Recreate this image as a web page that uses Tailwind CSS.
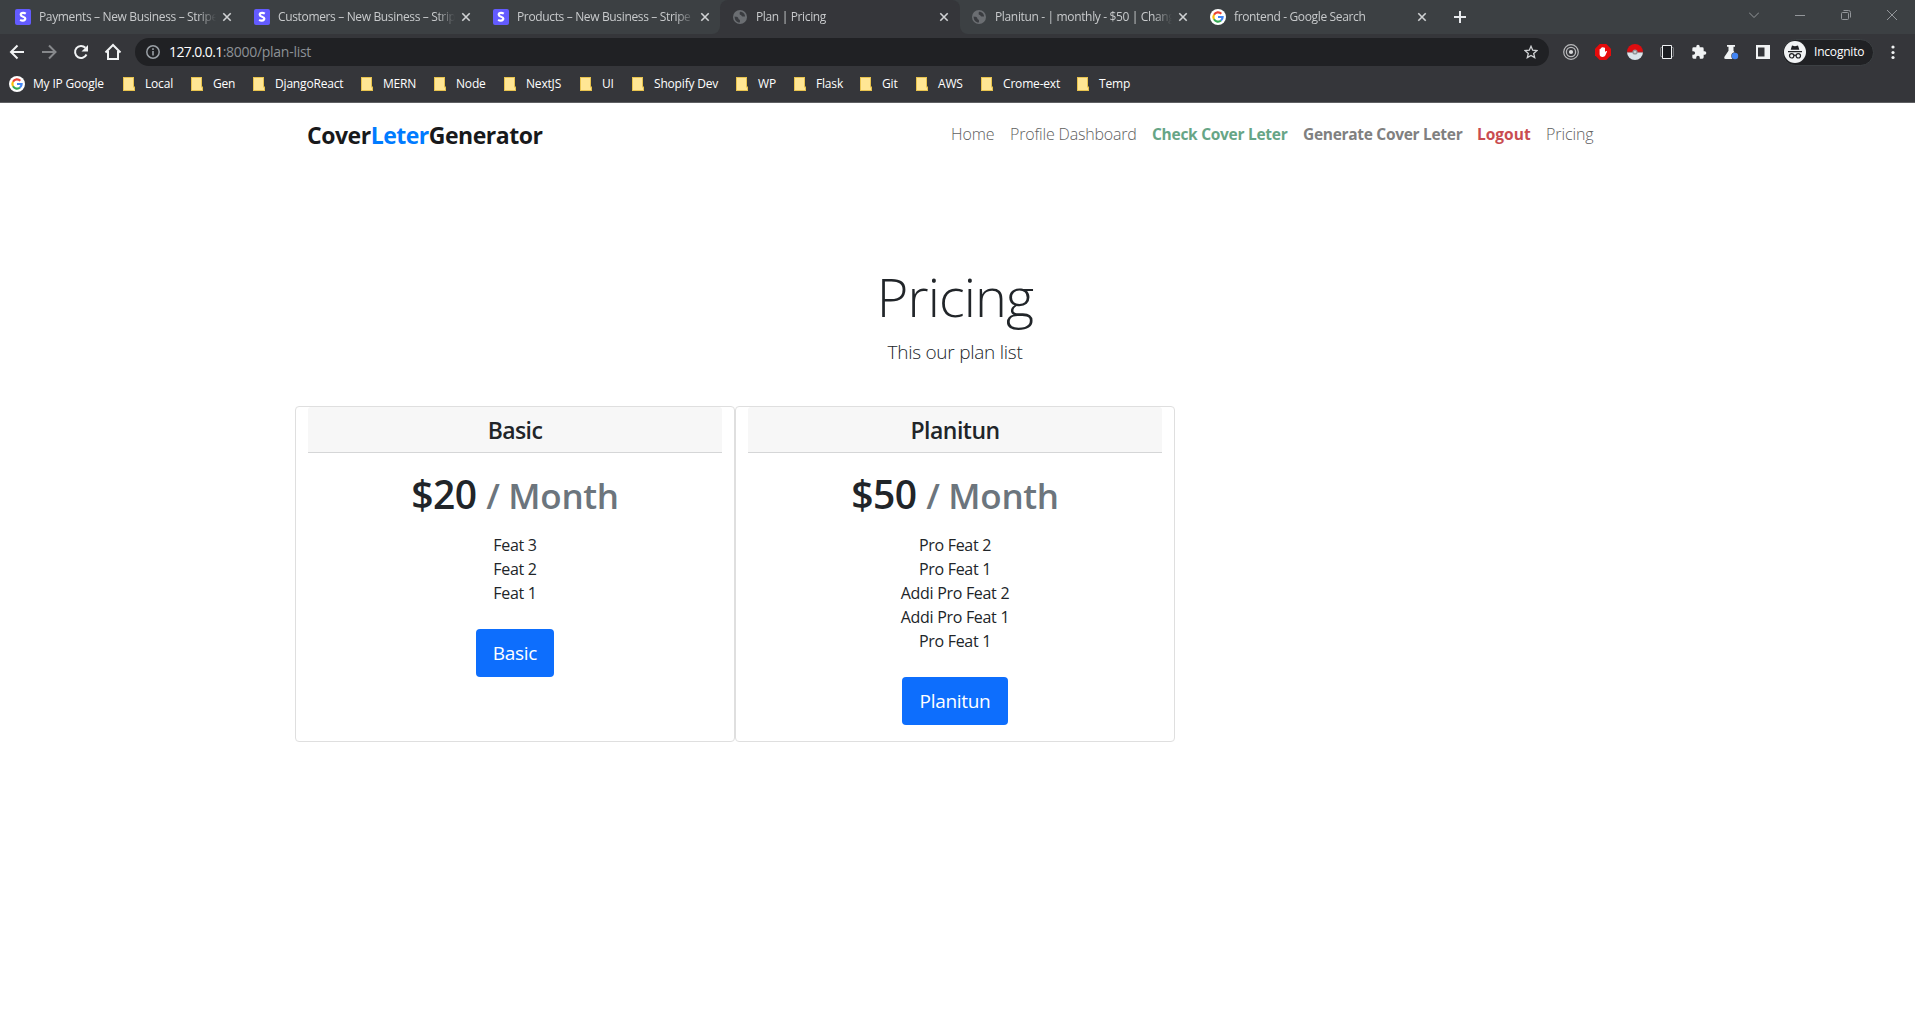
<!DOCTYPE html>
<html lang="en">
<head>
<meta charset="utf-8">
<title>Plan | Pricing</title>
<script src="https://cdn.jsdelivr.net/npm/@tailwindcss/browser@4"></script>
</head>
<body class="h-screen overflow-hidden bg-white font-['Open_Sans','Noto_Sans',sans-serif] text-[#212529]">

<svg class="hidden">
  <symbol id="stripe" viewBox="0 0 16 16"><rect width="16" height="16" rx="2" fill="#635bff"/><path d="M10.8 4.6C10 4.1 9 3.9 8.1 3.9c-1.500 0-2.400.700-2.400 1.800 0 2.500 4.600 1.700 4.600 3.900 0 1.300-1 2-2.500 2-1 0-2-.300-2.700-.700" fill="none" stroke="#fff" stroke-width="2.200"/></symbol>
  <symbol id="google" viewBox="0 0 16 16"><circle cx="8" cy="8" r="8" fill="#fff"/><g fill="none" stroke-width="2.200"><path d="M4 5.700A4.600 4.600 0 0 1 11.300 4.800" stroke="#ea4335"/><path d="M4 5.700A4.600 4.600 0 0 0 4 10.300" stroke="#fbbc05"/><path d="M4 10.300A4.600 4.600 0 0 0 11 11.500" stroke="#34a853"/><path d="M8 8h4.600A4.600 4.600 0 0 1 11 11.500" stroke="#4285f4"/></g></symbol>
  <symbol id="globe" viewBox="0 0 16 16"><circle cx="8" cy="8" r="7" fill="#6b6e72"/><path d="M2.600 7.500c1.400.300 2.600 0 3.400.900.700.800.200 1.800 1.300 2.200.900.400.800 1.700.500 3C4.600 13.500 2.500 10.900 2.600 7.500zM8 2.700c-.500 1-.300 2-.200 2.800.800.700 1.500.500 2 1.400.500.800 1.600.800 3.300.500C13 4.800 11 2.600 8 2.700z" fill="#3a3c40"/></symbol>
  <symbol id="close" viewBox="0 0 10 10"><path d="M1.300 1.300l7.400 7.400M8.700 1.300L1.300 8.700" stroke="#d0d2d4" stroke-width="1.600"/></symbol>
  <symbol id="folder" viewBox="0 0 12 14"><path d="M0 0h11v9.500h1V14H0z" fill="#e8c34e"/><path d="M1 1h9v12H1z" fill="#ffe694"/><path d="M10 10.500h1V13h-1z" fill="#ffe694"/></symbol>
</svg>

<header class="flex h-[103px] flex-col border-b border-[#5f6063] bg-[#35363a]">
  <!-- Tab strip -->
  <div class="flex h-[34px] shrink-0 bg-[#35363a]">
    <div id="tabs-left" class="flex w-[720px] rounded-br-lg bg-[#3c4043]"></div>
    <div class="w-[240px] bg-[#3c4043]"><div id="tab-active" class="flex h-full w-full rounded-t-lg bg-[#35363a]"></div></div>
    <div id="tabs-right" class="flex flex-1 rounded-bl-lg bg-[#3c4043]"></div>
  </div>

  <!-- Toolbar -->
  <div class="flex h-9 shrink-0 items-center">
    <div class="flex w-[135px] items-center gap-4 pl-2">
      <svg class="ml-px size-4" viewBox="0 0 16 16" fill="none" stroke="#f1f3f4" stroke-width="2"><path d="M15 8H2.500M8.500 1.500L2 8l6.500 6.500"/></svg>
      <svg class="size-4" viewBox="0 0 16 16" fill="none" stroke="#86888b" stroke-width="2"><path d="M1 8h13M8 1.500L14.500 8 8 14.500"/></svg>
      <svg class="size-4" viewBox="0 0 16 16"><path d="M13.500 10.500A6 6 0 1 1 12.400 3.800" fill="none" stroke="#f1f3f4" stroke-width="2"/><path d="M15 1v6.500H8.500z" fill="#f1f3f4"/></svg>
      <svg class="-ml-px size-[18px]" viewBox="0 0 18 18"><path d="M1.500 9.500L9 2l7.500 7.500M4 8v8h10V8" fill="none" stroke="#f1f3f4" stroke-width="2"/></svg>
    </div>
    <div class="flex h-7 w-[1414px] items-center rounded-full bg-[#202124] pr-[11px] pl-[11px]">
      <svg class="size-[14px]" viewBox="0 0 14 14"><circle cx="7" cy="7" r="6.200" fill="none" stroke="#9aa0a6" stroke-width="1.500"/><path d="M6.200 6h1.600v4.500H6.200zM6.200 3.300h1.600v1.600H6.200z" fill="#9aa0a6"/></svg>
      <div class="ml-[9px] flex-1 text-sm leading-7 tracking-[-0.28px] text-[#8d9196]"><span class="tracking-[-0.6px] text-white">127.0.0.1</span>:8000/plan-list</div>
      <svg class="size-[14px]" viewBox="0 0 14 14"><path d="M7 1.300l1.700 3.900 4.200.400-3.200 2.800 1 4.200L7 10.400l-3.700 2.200 1-4.200L1.100 5.600l4.200-.400z" fill="none" stroke="#d0d2d4" stroke-width="1.300"/></svg>
    </div>
    <div class="ml-[14px] flex items-center gap-4">
      <svg class="size-4" viewBox="0 0 16 16" fill="none" stroke="#b9babc"><circle cx="8" cy="8" r="7.300" stroke-width="1.200"/><circle cx="8" cy="8" r="4.600" stroke-width="1.300"/><circle cx="8" cy="8" r="2.100" fill="#d8d9da" stroke="none"/></svg>
      <svg class="size-4" viewBox="0 0 16 16"><path d="M4.700 0h6.600L16 4.700v6.600L11.300 16H4.700L0 11.300V4.700z" fill="#e50b0b"/><path d="M4.600 8.300V5.200q.6-.8 1.200 0V4q.7-.8 1.400 0v-.700q.7-.8 1.400 0V4q.7-.8 1.400 0v4l1-1q.9-.3 1.100.4l-1.800 4.200q-.6 1.400-2.700 1.400-3 0-3-3z" fill="#fff"/></svg>
      <svg class="size-4" viewBox="0 0 16 16"><path d="M0 8a8 8 0 0 1 16 0z" fill="#dd0d10"/><path d="M0 8a8 8 0 0 0 16 0z" fill="#d9e4ea"/><path d="M0 7.500h16v1H0z" fill="#8c3033"/><circle cx="8" cy="8" r="2.600" fill="#8f9599"/><circle cx="8" cy="8" r="1.300" fill="#c9ced1"/></svg>
      <svg class="size-4" viewBox="0 0 16 16"><path d="M1.500 3.500v9M14.500 3.500v9M2 3.500h2M2 12.500h2M12 3.500h2M12 12.500h2" stroke="#77797c" fill="none"/><path d="M3.500 1.500h9v13h-9z" fill="#1b1d21" stroke="#f1f3f4"/></svg>
      <svg class="size-4" viewBox="0 0 24 24"><path d="M20.500 11H19V7a2 2 0 0 0-2-2h-4V3.500a2.500 2.500 0 0 0-5 0V5H4a2 2 0 0 0-2 2v3.800h1.500a2.700 2.700 0 0 1 0 5.400H2V20a2 2 0 0 0 2 2h3.800v-1.500a2.700 2.700 0 0 1 5.400 0V22H17a2 2 0 0 0 2-2v-4h1.500a2.500 2.500 0 0 0 0-5z" fill="#f1f3f4"/></svg>
      <svg class="size-4" viewBox="0 0 16 16"><path d="M4 1h8v1.800h-1.500v4L14.500 13q.6 2-1.500 2H2.500q-1.800-.2-1.200-2L5.500 6.800v-4H4z" fill="#f1f3f4"/><circle cx="12" cy="12" r="3.700" fill="#35363a"/><circle cx="12" cy="12" r="3.200" fill="#4285f4"/></svg>
      <svg class="size-4" viewBox="0 0 16 16"><path d="M1 1h14v14H1zM3 3.500v9h6.500v-9z" fill="#f1f3f4" fill-rule="evenodd"/></svg>
    </div>
    <div class="ml-[11px] flex h-[27px] w-[92px] items-center rounded-full border border-[#3c4043] bg-[#202124]">
      <svg class="ml-px size-[22px] shrink-0" viewBox="0 0 22 22"><circle cx="11" cy="11" r="11" fill="#f1f3f4"/><path d="M4 10h14v1.200H4zM6.700 8.700L8 4.500l3 .7 3-.7 1.300 4.200z" fill="#202124"/><g fill="none" stroke="#202124" stroke-width="1.200"><circle cx="7.700" cy="14.800" r="2.200"/><circle cx="14.300" cy="14.800" r="2.200"/><path d="M9.900 14.500q1.100-.7 2.200 0"/></g></svg>
      <span class="ml-2 text-xs tracking-[-0.2px] text-white">Incognito</span>
    </div>
    <svg class="ml-[17px] h-4 w-1" viewBox="0 0 4 16" fill="#f1f3f4"><circle cx="2" cy="3" r="1.600"/><circle cx="2" cy="8.500" r="1.600"/><circle cx="2" cy="13.500" r="1.600"/></svg>
  </div>

  <!-- Bookmarks bar -->
  <div id="bookmarks" class="flex flex-1 items-center pb-[4px] pl-[9px] text-xs tracking-[-0.18px] text-white"></div>
</header>

<main class="ml-[295px] w-[1320px]">
  <nav class="flex h-[62px] items-center pr-3 pl-3">
    <div class="pt-px text-[23px] leading-9 font-bold tracking-[-0.48px] whitespace-nowrap text-[#18191b]">Cover<span class="text-[#007bff]">Leter</span>Generator</div>
    <div class="ml-auto flex gap-4 text-base font-light whitespace-nowrap text-[#606060]">
      <a class="w-[43px] tracking-[-0.1px]">Home</a>
      <a class="w-[126px] tracking-[-0.18px]">Profile Dashboard</a>
      <a class="w-[135px] text-[15.5px] leading-6 font-bold tracking-[-0.28px] text-[#66a586]">Check Cover Leter</a>
      <a class="w-[158px] text-[15.5px] leading-6 font-bold tracking-[-0.3px] text-[#808080]">Generate Cover Leter</a>
      <a class="w-[53px] text-[15.5px] leading-6 font-bold text-[#c94c50]">Logout</a>
      <a class="w-[57px] tracking-[-0.1px]">Pricing</a>
    </div>
  </nav>

  <section class="mt-[98px] text-center font-light">
    <h1 class="text-[54px] leading-[67px] tracking-[-0.9px]">Pricing</h1>
    <p class="mt-[7px] text-[19px] leading-[30px] tracking-[-0.25px]">This our plan list</p>
  </section>

  <section class="mt-[39px] flex text-center">
    <article class="h-[336px] w-[440px] rounded border border-[#dfdfdf] px-3">
      <h4 class="h-[46px] rounded-t-[3px] border-b border-[#d5d6d7] bg-[#f7f7f7] text-[23px] leading-[47px] font-semibold tracking-[-0.6px]">Basic</h4>
      <div class="flex flex-col items-center pt-[17px]">
        <h1 class="text-[39px] leading-[48px] font-semibold tracking-[-0.5px]">$20 <small class="text-[35px] tracking-[-0.3px] text-[#6c757d]">/ Month</small></h1>
        <ul class="mt-[13px] text-base leading-6 tracking-[-0.3px]"><li>Feat 3</li><li>Feat 2</li><li>Feat 1</li></ul>
        <button class="mt-6 h-12 w-[78px] rounded bg-[#0d6efd] pt-px text-[19px] tracking-[-0.3px] text-white">Basic</button>
      </div>
    </article>
    <article class="h-[336px] w-[440px] rounded border border-[#dfdfdf] px-3">
      <h4 class="h-[46px] rounded-t-[3px] border-b border-[#d5d6d7] bg-[#f7f7f7] text-[23px] leading-[47px] font-semibold tracking-[-0.5px]">Planitun</h4>
      <div class="flex flex-col items-center pt-[17px]">
        <h1 class="text-[39px] leading-[48px] font-semibold tracking-[-0.5px]">$50 <small class="text-[35px] tracking-[-0.3px] text-[#6c757d]">/ Month</small></h1>
        <ul class="mt-[13px] text-base leading-6 tracking-[-0.3px]"><li>Pro Feat 2</li><li>Pro Feat 1</li><li>Addi Pro Feat 2</li><li>Addi Pro Feat 1</li><li>Pro Feat 1</li></ul>
        <button class="mt-6 h-12 w-[106px] rounded bg-[#0d6efd] pt-px text-[19px] tracking-[-0.3px] text-white">Planitun</button>
      </div>
    </article>
  </section>
</main>

<script>
const icon = (id, cls) => `<svg class="${cls}"><use href="#${id}"/></svg>`;
const tab = (ico, title, sep) => `
  <div class="flex h-full w-[239px] shrink-0 items-center pl-[14px]">
    ${icon(ico, 'size-4 shrink-0')}
    <span class="ml-2 w-[177px] shrink-0 overflow-hidden text-xs leading-6 tracking-[-0.35px] whitespace-nowrap text-[#c8cacc] mask-r-from-90%">${title}</span>
    ${icon('close', 'ml-[6px] size-[10px] shrink-0')}
    ${sep ? '<i class="ml-[10px] h-5 w-px bg-[#6d7073]"></i>' : ''}
  </div>`;
document.getElementById('tabs-left').innerHTML =
  '<div class="w-px"></div>' +
  tab('stripe', 'Payments – New Business – Stripe', true) +
  tab('stripe', 'Customers – New Business – Stripe', true) +
  tab('stripe', 'Products – New Business – Stripe', false);
document.getElementById('tab-active').innerHTML = '<div class="-ml-[2px] flex">' + tab('globe', 'Plan | Pricing', false) + '</div>';
document.getElementById('tabs-right').innerHTML = '<div class="-ml-[3px] flex">' +
  tab('globe', 'Planitun - | monthly - $50 | Change', true) +
  tab('google', 'frontend - Google Search', true) + `</div>
  <div class="flex flex-1 items-center justify-between pl-[19px]">
    <svg class="size-3" viewBox="0 0 12 12"><path d="M6 0v12M0 6h12" stroke="#e8eaed" stroke-width="2"/></svg>
    <div class="mr-[18px] flex items-center gap-9 pb-[5px]">
      <svg class="size-[10px]" viewBox="0 0 10 10" fill="none" stroke="#93969a"><path d="M0 2.500l5 5 5-5"/></svg>
      <svg class="size-[10px]" viewBox="0 0 10 10" stroke="#93969a"><path d="M0 5.500h10"/></svg>
      <svg class="size-[10px]" viewBox="0 0 10 10" fill="none" stroke="#93969a"><rect x=".5" y="2.500" width="7" height="7" rx="1"/><path d="M2.500.5h5a2 2 0 0 1 2 2v5"/></svg>
      <svg class="size-[10px]" viewBox="0 0 10 10" stroke="#93969a"><path d="M0 0l10 10M10 0L0 10"/></svg>
    </div>
  </div>`;
const marks = [['Local',68],['Gen',62],['DjangoReact',108],['MERN',73],['Node',70],['NextJS',76],['UI',52],['Shopify Dev',104],['WP',58],['Flask',66],['Git',56],['AWS',65],['Crome-ext',96],['Temp',80]];
document.getElementById('bookmarks').innerHTML =
  `<div class="flex w-[114px] shrink-0 items-center gap-2">${icon('google', 'size-4')}<span>My IP Google</span></div>` +
  marks.map(([name, w]) => `<div class="flex shrink-0 items-center gap-[10px] whitespace-nowrap" style="width:${w}px">${icon('folder', 'h-[14px] w-3')}<span>${name}</span></div>`).join('');
</script>
</body>
</html>
